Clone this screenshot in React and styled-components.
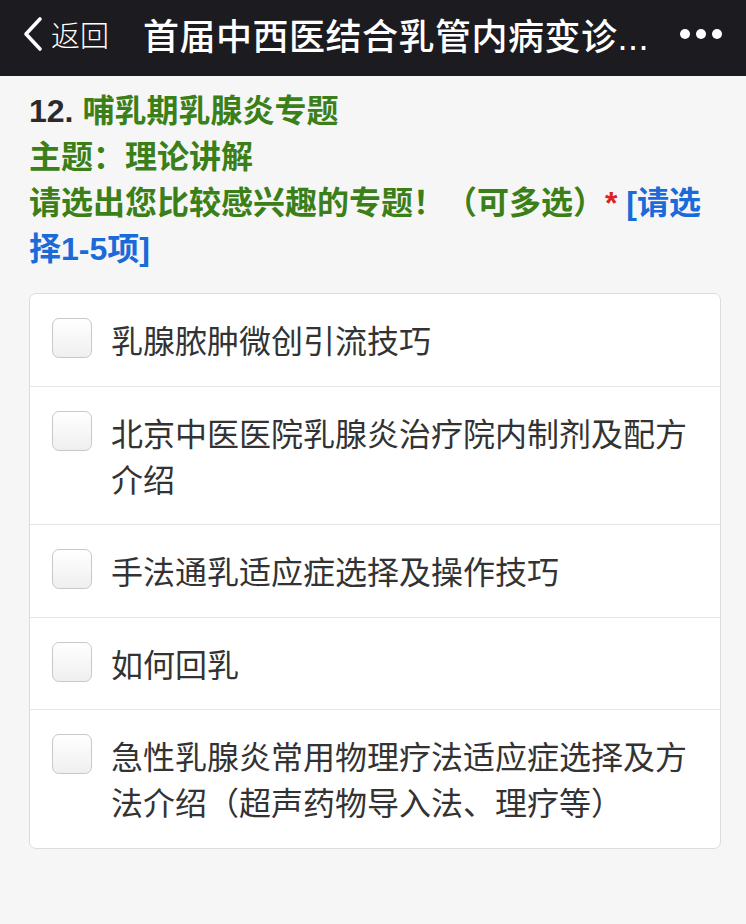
import React from 'react'
import styled, { createGlobalStyle } from 'styled-components'

const GlobalStyle = createGlobalStyle`
  html, body {
    margin: 0;
    padding: 0;
    background: #f6f6f6;
    font-family: "Liberation Sans", "Noto Sans CJK SC", sans-serif;
  }
`

const options = [
  '乳腺脓肿微创引流技巧',
  '北京中医医院乳腺炎治疗院内制剂及配方介绍',
  '手法通乳适应症选择及操作技巧',
  '如何回乳',
  '急性乳腺炎常用物理疗法适应症选择及方法介绍（超声药物导入法、理疗等）',
]

export default function App() {
  const [checked, setChecked] = React.useState([])

  const toggle = (i) =>
    setChecked((prev) => (prev.includes(i) ? prev.filter((x) => x !== i) : [...prev, i]))

  return (
    <Page>
      <GlobalStyle />
      <NavBar>
        <BackButton>
          <svg width="22" height="36" viewBox="0 0 22 36">
            <path d="M18 3 L4 18 L18 33" fill="none" stroke="#fff" strokeWidth="3.6" strokeLinecap="round" strokeLinejoin="round" />
          </svg>
          <span>返回</span>
        </BackButton>
        <NavTitle>首届中西医结合乳管内病变诊...</NavTitle>
        <MoreDots>
          <i /><i /><i />
        </MoreDots>
      </NavBar>

      <Question>
        <div>
          <QNum>12. </QNum>哺乳期乳腺炎专题
        </div>
        <div>主题：理论讲解</div>
        <div>
          请选出您比较感兴趣的专题！（可多选）<Required>*</Required> <Hint>[请选择1-5项]</Hint>
        </div>
      </Question>

      <Card>
        {options.map((text, i) => (
          <Option key={i} onClick={() => toggle(i)}>
            <Box $on={checked.includes(i)} />
            <OptionText>{text}</OptionText>
          </Option>
        ))}
      </Card>
    </Page>
  )
}

const Page = styled.div`
  min-height: 924px;
  background: #f6f6f6;
`

const NavBar = styled.div`
  height: 76px;
  background: #1c1b20;
  display: flex;
  align-items: center;
  padding: 0 24px 0 22px;
  box-sizing: border-box;
  color: #fff;
`

const BackButton = styled.div`
  display: flex;
  align-items: center;
  gap: 7px;
  margin-top: -8px;
  span {
    font-size: 29px;
    font-weight: 300;
  }
`

const NavTitle = styled.div`
  margin-left: 34px;
  margin-top: -8px;
  font-size: 36px;
  font-weight: 500;
  letter-spacing: 0.5px;
  white-space: nowrap;
  flex: 1;
`

const MoreDots = styled.div`
  display: flex;
  gap: 6px;
  margin-top: -8px;
  i {
    width: 10px;
    height: 10px;
    border-radius: 50%;
    background: #fff;
  }
`

const Question = styled.div`
  padding: 12px 30px 0 29px;
  font-size: 32px;
  line-height: 46px;
  font-weight: bold;
  color: #3b7f18;
`

const QNum = styled.span`
  color: #2a2a2a;
`

const Required = styled.span`
  color: #e0201c;
`

const Hint = styled.span`
  color: #1a6ad9;
`

const Card = styled.div`
  margin: 21px 25px 0 29px;
  background: #fff;
  border: 1.5px solid #dcdcdc;
  border-radius: 7px;
`

const Option = styled.div`
  display: flex;
  align-items: flex-start;
  padding: 25px 20px 20.5px 22px;
  & + & {
    border-top: 1.5px solid #e6e6e6;
  }
`

const Box = styled.div`
  flex: none;
  width: 40px;
  height: 40px;
  margin-top: -1px;
  box-sizing: border-box;
  border: 1.5px solid #c8c8c8;
  border-radius: 7px;
  background: ${(p) => (p.$on ? '#3b7f18' : 'linear-gradient(#fff, #efefef)')};
`

const OptionText = styled.div`
  margin-left: 19px;
  font-size: 32px;
  line-height: 46px;
  color: #333;
`
